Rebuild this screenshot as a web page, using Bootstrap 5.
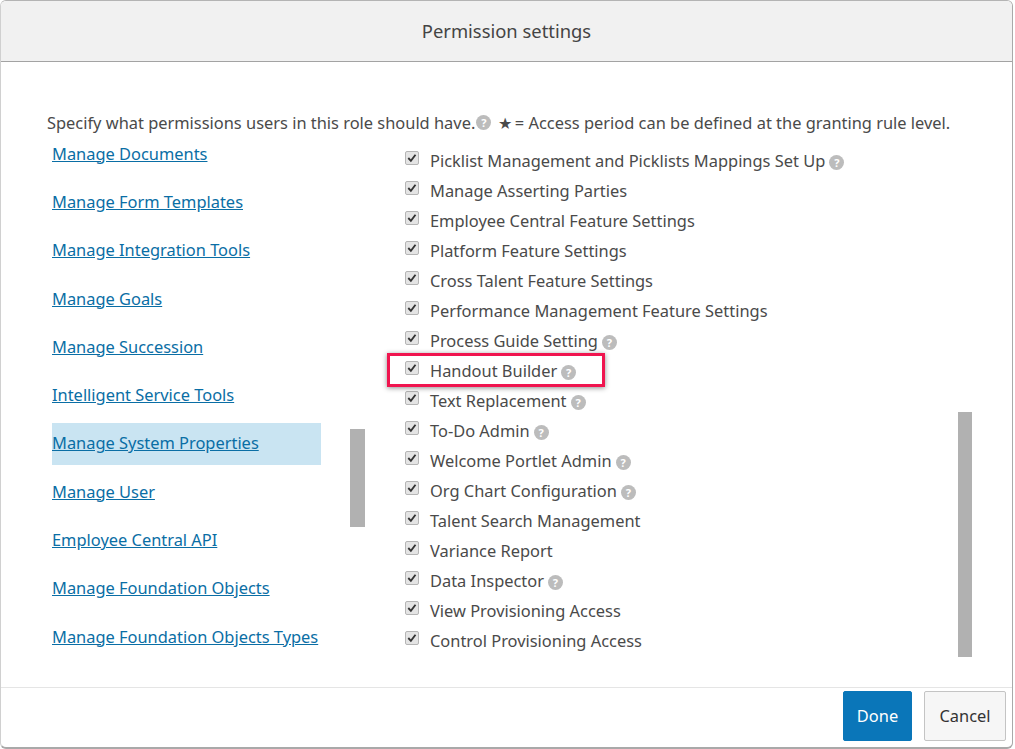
<!DOCTYPE html>
<html lang="en"><head><meta charset="utf-8"><title>Permission settings</title>
<link href="https://cdn.jsdelivr.net/npm/bootstrap@5.3.0/dist/css/bootstrap.min.css" rel="stylesheet">
<style>
html,body{height:749px;overflow:hidden;background:#fff}
body{font-family:"Noto Sans","Open Sans",sans-serif;font-size:16.42px;color:#4a4a4a}
.dlg{width:1013px;height:749px;border:1px solid #a9a9a9;border-left-color:#d0d0d0;border-top-color:#b4b4b4;border-bottom-width:2px;border-radius:6px;overflow:hidden}
.dlg-head{height:61px;background:#f1f1f1;border-bottom:1px solid #a3a3a3;font-size:18.4px;color:#444}
.dlg-body{height:625px;padding-top:51px}
.intro{margin:0 0 0 46px;line-height:20px;height:20px;white-space:nowrap}
.intro .qm{vertical-align:2px;margin-left:1px}
.star{margin:0 3px 0 -2px}
.left-pane{width:313px;margin-left:51px}
.left-item{height:42px;width:269px;margin-bottom:6.3px;display:flex;align-items:center}
.left-item.sel{background:#c9e4f2}
.left-item a{color:#0a6ea5;white-space:nowrap}
.thumb{background:#b1b1b1}
.thumb-l{width:15px;height:98px;margin-top:296px}
.right-pane{margin-left:40px;width:553px;padding-top:13px}
.perm{height:30px;display:flex;align-items:center;white-space:nowrap}
.cb{width:14px;height:14px;margin:-6px 11px 0 0;border:1px solid #b5b5b5;border-radius:2px;background:#e4e4e4;flex:none;display:flex}
.qm{display:inline-flex;width:15px;height:15px;border-radius:50%;background:#bcbcbc;color:#fff;font-size:11px;font-weight:700;line-height:15px;align-items:center;justify-content:center;vertical-align:0;margin-left:4px}
.thumb-r{width:14px;height:245px;margin-top:279px}
.hl{position:absolute;left:386px;top:352px;width:218px;height:34px;border:3px solid #f0154f;box-shadow:0 1px 5px rgba(0,0,0,.45);pointer-events:none}
.dlg-foot{height:59px;border-top:1px solid #e5e5e5;padding:3px 6px 0 0}
.btn-done,.btn-cancel{height:50px;border-radius:2px;font-size:16.42px;padding:0}
.btn-done{width:69px;background:#0a76b9;border:1px solid #0a76b9;color:#fff;margin-right:12px}
.btn-cancel{width:82px;background:#f6f6f6;border:1px solid #c4c4c4;color:#333}
</style></head><body>
<div class="dlg position-relative bg-white">
<div class="dlg-head d-flex align-items-center justify-content-center">Permission settings</div>
<div class="dlg-body">
<p class="intro">Specify what permissions users in this role should have.<span class="qm">?</span>&nbsp; <span class="star">★</span>= Access period can be defined at the granting rule level.</p>
<div class="d-flex">
<div class="left-pane d-flex justify-content-between">
<div>
<div class="left-item"><a href="#">Manage Documents</a></div>
<div class="left-item"><a href="#">Manage Form Templates</a></div>
<div class="left-item"><a href="#">Manage Integration Tools</a></div>
<div class="left-item"><a href="#">Manage Goals</a></div>
<div class="left-item"><a href="#">Manage Succession</a></div>
<div class="left-item"><a href="#">Intelligent Service Tools</a></div>
<div class="left-item sel"><a href="#">Manage System Properties</a></div>
<div class="left-item"><a href="#">Manage User</a></div>
<div class="left-item"><a href="#">Employee Central API</a></div>
<div class="left-item"><a href="#">Manage Foundation Objects</a></div>
<div class="left-item"><a href="#">Manage Foundation Objects Types</a></div>
</div>
<div class="thumb thumb-l"></div>
</div>
<div class="right-pane">
<div class="perm"><span class="cb"><svg viewBox="0 0 13 13"><path d="M2.5 6.5l2.8 3 5-6.5" fill="none" stroke="#333" stroke-width="2"/></svg></span><span>Picklist Management and Picklists Mappings Set Up<span class="qm">?</span></span></div>
<div class="perm"><span class="cb"><svg viewBox="0 0 13 13"><path d="M2.5 6.5l2.8 3 5-6.5" fill="none" stroke="#333" stroke-width="2"/></svg></span><span>Manage Asserting Parties</span></div>
<div class="perm"><span class="cb"><svg viewBox="0 0 13 13"><path d="M2.5 6.5l2.8 3 5-6.5" fill="none" stroke="#333" stroke-width="2"/></svg></span><span>Employee Central Feature Settings</span></div>
<div class="perm"><span class="cb"><svg viewBox="0 0 13 13"><path d="M2.5 6.5l2.8 3 5-6.5" fill="none" stroke="#333" stroke-width="2"/></svg></span><span>Platform Feature Settings</span></div>
<div class="perm"><span class="cb"><svg viewBox="0 0 13 13"><path d="M2.5 6.5l2.8 3 5-6.5" fill="none" stroke="#333" stroke-width="2"/></svg></span><span>Cross Talent Feature Settings</span></div>
<div class="perm"><span class="cb"><svg viewBox="0 0 13 13"><path d="M2.5 6.5l2.8 3 5-6.5" fill="none" stroke="#333" stroke-width="2"/></svg></span><span>Performance Management Feature Settings</span></div>
<div class="perm"><span class="cb"><svg viewBox="0 0 13 13"><path d="M2.5 6.5l2.8 3 5-6.5" fill="none" stroke="#333" stroke-width="2"/></svg></span><span>Process Guide Setting<span class="qm">?</span></span></div>
<div class="perm"><span class="cb"><svg viewBox="0 0 13 13"><path d="M2.5 6.5l2.8 3 5-6.5" fill="none" stroke="#333" stroke-width="2"/></svg></span><span>Handout Builder<span class="qm">?</span></span></div>
<div class="perm"><span class="cb"><svg viewBox="0 0 13 13"><path d="M2.5 6.5l2.8 3 5-6.5" fill="none" stroke="#333" stroke-width="2"/></svg></span><span>Text Replacement<span class="qm">?</span></span></div>
<div class="perm"><span class="cb"><svg viewBox="0 0 13 13"><path d="M2.5 6.5l2.8 3 5-6.5" fill="none" stroke="#333" stroke-width="2"/></svg></span><span>To-Do Admin<span class="qm">?</span></span></div>
<div class="perm"><span class="cb"><svg viewBox="0 0 13 13"><path d="M2.5 6.5l2.8 3 5-6.5" fill="none" stroke="#333" stroke-width="2"/></svg></span><span>Welcome Portlet Admin<span class="qm">?</span></span></div>
<div class="perm"><span class="cb"><svg viewBox="0 0 13 13"><path d="M2.5 6.5l2.8 3 5-6.5" fill="none" stroke="#333" stroke-width="2"/></svg></span><span>Org Chart Configuration<span class="qm">?</span></span></div>
<div class="perm"><span class="cb"><svg viewBox="0 0 13 13"><path d="M2.5 6.5l2.8 3 5-6.5" fill="none" stroke="#333" stroke-width="2"/></svg></span><span>Talent Search Management</span></div>
<div class="perm"><span class="cb"><svg viewBox="0 0 13 13"><path d="M2.5 6.5l2.8 3 5-6.5" fill="none" stroke="#333" stroke-width="2"/></svg></span><span>Variance Report</span></div>
<div class="perm"><span class="cb"><svg viewBox="0 0 13 13"><path d="M2.5 6.5l2.8 3 5-6.5" fill="none" stroke="#333" stroke-width="2"/></svg></span><span>Data Inspector<span class="qm">?</span></span></div>
<div class="perm"><span class="cb"><svg viewBox="0 0 13 13"><path d="M2.5 6.5l2.8 3 5-6.5" fill="none" stroke="#333" stroke-width="2"/></svg></span><span>View Provisioning Access</span></div>
<div class="perm"><span class="cb"><svg viewBox="0 0 13 13"><path d="M2.5 6.5l2.8 3 5-6.5" fill="none" stroke="#333" stroke-width="2"/></svg></span><span>Control Provisioning Access</span></div>
</div>
<div class="thumb thumb-r"></div>
</div>
</div>
<div class="dlg-foot d-flex justify-content-end align-items-start">
<button class="btn btn-done">Done</button><button class="btn btn-cancel">Cancel</button>
</div>
<div class="hl"></div>
</div>
<script src="https://cdn.jsdelivr.net/npm/bootstrap@5.3.0/dist/js/bootstrap.bundle.min.js"></script>
</body></html>
